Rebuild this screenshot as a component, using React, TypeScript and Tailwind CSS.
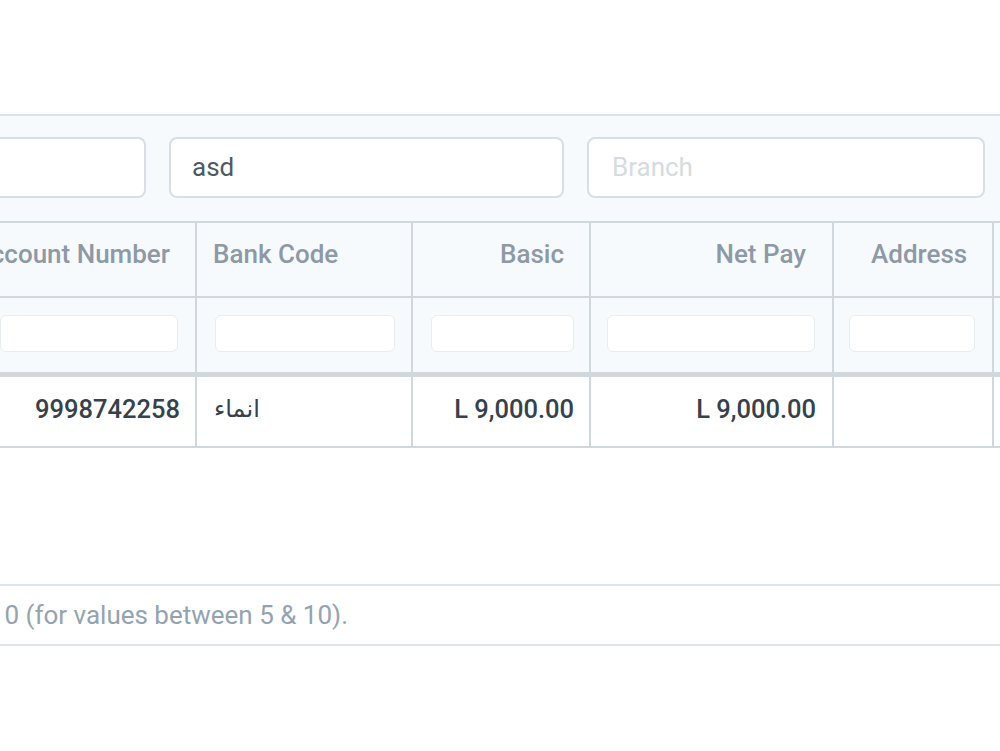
import React from "react";

const font = { fontFamily: "Roboto, 'DejaVu Sans', sans-serif" };

export default function App() {
  return (
    <div className="w-[1000px] h-[751px] overflow-hidden bg-white font-medium" style={font}>
      <div className="h-[114px]" />
      {/* filter panel */}
      <div className="border-t-2 border-[#dde2e6] bg-[#f7fafc] pt-[21px] pb-[23px]">
        <div className="flex gap-[23px] -ml-[250px]">
          <div className="w-[396px] h-[61px] shrink-0 rounded-[8px] border-2 border-[#d8dee3] bg-white" />
          <div className="w-[395px] h-[61px] shrink-0 rounded-[8px] border-2 border-[#d8dee3] bg-white flex items-center px-[21px] text-[26px] font-normal text-[#4f5962]">
            asd
          </div>
          <div className="w-[398px] h-[61px] shrink-0 rounded-[8px] border-2 border-[#d8dee3] bg-white flex items-center px-[23px] text-[26px] font-normal text-[#d5dbe0]">
            Branch
          </div>
        </div>
      </div>
      {/* table */}
      <div className="border-t-2 border-[#d1d8dd] flex flex-col">
        {/* header row */}
        <div className="flex h-[75px] bg-[#f7fafc] border-b-2 border-[#d1d8dd] text-[26px] leading-[36px] text-[#8d99a6]">
          <div className="w-[197px] shrink-0 border-r-2 border-[#d1d8dd] flex justify-end pr-[25px] pt-[13px] whitespace-nowrap">
            <span className="shrink-0">Account Number</span>
          </div>
          <div className="w-[216px] shrink-0 border-r-2 border-[#d1d8dd] pl-[16px] pt-[13px] whitespace-nowrap">
            Bank Code
          </div>
          <div className="w-[178px] shrink-0 border-r-2 border-[#d1d8dd] flex justify-end pr-[25px] pt-[13px]">
            Basic
          </div>
          <div className="w-[243px] shrink-0 border-r-2 border-[#d1d8dd] flex justify-end pr-[26px] pt-[13px] whitespace-nowrap">
            Net Pay
          </div>
          <div className="w-[160px] shrink-0 border-r-2 border-[#d1d8dd] pl-[37px] pt-[13px]">
            Address
          </div>
          <div className="flex-1" />
        </div>
        {/* filter row */}
        <div className="flex h-[79px] bg-[#f7fafc] border-b-[5px] border-[#d1d8dd]">
          <div className="w-[197px] shrink-0 border-r-2 border-[#d1d8dd] pr-[17px] pt-[17px]">
            <div className="h-[37px] rounded-[6px] border border-[#e9edf0] bg-white" />
          </div>
          <div className="w-[216px] shrink-0 border-r-2 border-[#d1d8dd] pl-[18px] pr-[16px] pt-[17px]">
            <div className="h-[37px] rounded-[6px] border border-[#e9edf0] bg-white" />
          </div>
          <div className="w-[178px] shrink-0 border-r-2 border-[#d1d8dd] pl-[18px] pr-[15px] pt-[17px]">
            <div className="h-[37px] rounded-[6px] border border-[#e9edf0] bg-white" />
          </div>
          <div className="w-[243px] shrink-0 border-r-2 border-[#d1d8dd] pl-[16px] pr-[17px] pt-[17px]">
            <div className="h-[37px] rounded-[6px] border border-[#e9edf0] bg-white" />
          </div>
          <div className="w-[160px] shrink-0 border-r-2 border-[#d1d8dd] pl-[15px] pr-[17px] pt-[17px]">
            <div className="h-[37px] rounded-[6px] border border-[#e9edf0] bg-white" />
          </div>
          <div className="flex-1" />
        </div>
        {/* data row */}
        <div className="flex h-[71px] bg-white border-b-2 border-[#d1d8dd] text-[25.5px] leading-[36px] text-[#36414c]">
          <div className="w-[197px] shrink-0 border-r-2 border-[#d1d8dd] flex justify-end pr-[15px] pt-[14px]">
            9998742258
          </div>
          <div
            className="w-[216px] shrink-0 border-r-2 border-[#d1d8dd] pl-[17px] pt-[14px]"
            style={{ fontFamily: "'DejaVu Sans', sans-serif", fontSize: "24px" }}
          >
            <span dir="rtl">انماء</span>
          </div>
          <div className="w-[178px] shrink-0 border-r-2 border-[#d1d8dd] flex justify-end pr-[15px] pt-[14px] whitespace-nowrap">
            L 9,000.00
          </div>
          <div className="w-[243px] shrink-0 border-r-2 border-[#d1d8dd] flex justify-end pr-[16px] pt-[14px] whitespace-nowrap">
            L 9,000.00
          </div>
          <div className="w-[160px] shrink-0 border-r-2 border-[#d1d8dd]" />
          <div className="flex-1" />
        </div>
      </div>
      <div className="h-[136px]" />
      {/* footer */}
      <div className="h-[62px] border-y-2 border-[#dfe4e8] flex items-center">
        <div className="w-[348px] shrink-0 flex justify-end whitespace-nowrap text-[26px] font-normal text-[#95a3b1]">
          <span className="shrink-0">10 (for values between 5 &amp; 10).</span>
        </div>
      </div>
    </div>
  );
}
